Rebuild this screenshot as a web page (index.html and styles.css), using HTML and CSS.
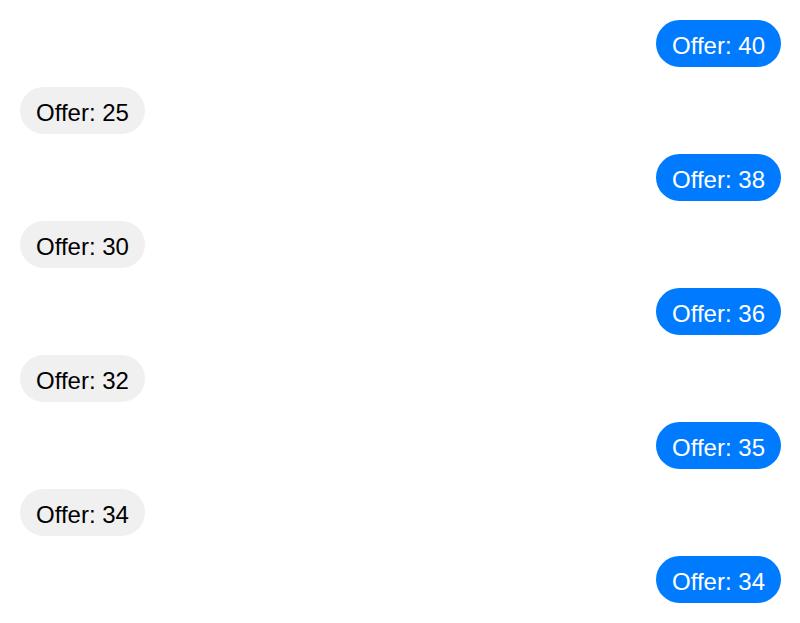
FILE: index.html
```html
<!DOCTYPE html>
<html>
<head>
<meta charset="utf-8">
<link rel="stylesheet" href="styles.css">
</head>
<body>
<div class="chat">
  <div class="msg mine">Offer: 40</div>
  <div class="msg theirs">Offer: 25</div>
  <div class="msg mine">Offer: 38</div>
  <div class="msg theirs">Offer: 30</div>
  <div class="msg mine">Offer: 36</div>
  <div class="msg theirs">Offer: 32</div>
  <div class="msg mine">Offer: 35</div>
  <div class="msg theirs">Offer: 34</div>
  <div class="msg mine">Offer: 34</div>
</div>
</body>
</html>
```
FILE: styles.css
```css
html, body {
  margin: 0;
  padding: 0;
  background: #ffffff;
}
.chat {
  display: flex;
  flex-direction: column;
  gap: 20px;
  padding: 20px 19px 20px 20px;
  font-family: "Liberation Sans", Arial, sans-serif;
  font-size: 24px;
}
.msg {
  padding: 12px 16px 8px;
  border-radius: 24px;
  line-height: 27px;
}
.mine {
  align-self: flex-end;
  background: #007bff;
  color: #ffffff;
}
.theirs {
  align-self: flex-start;
  background: #f0f0f0;
  color: #000000;
}
```
